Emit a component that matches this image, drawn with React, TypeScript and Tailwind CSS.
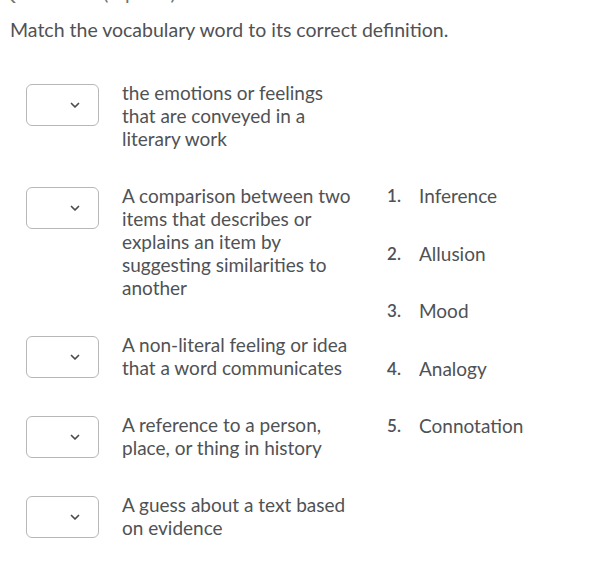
import React from "react";

const rows = [
  "the emotions or feelings that are conveyed in a literary work",
  "A comparison between two items that describes or explains an item by suggesting similarities to another",
  "A non-literal feeling or idea that a word communicates",
  "A reference to a person, place, or thing in history",
  "A guess about a text based on evidence",
];

const choices = ["Inference", "Allusion", "Mood", "Analogy", "Connotation"];

function SelectBox() {
  return (
    <div className="flex h-[42px] w-[73px] shrink-0 items-center justify-end rounded-[6px] border border-[#b5b7b9] bg-white pr-[18px]">
      <svg width="10" height="7" viewBox="0 0 10 7" fill="none">
        <path d="M1.5 1.5 L5 5 L8.5 1.5" stroke="#494c4e" strokeWidth="1.7" strokeLinecap="round" strokeLinejoin="round" />
      </svg>
    </div>
  );
}

export default function App() {
  return (
    <div className="min-h-[577px] bg-white text-[#4f5255] font-['Lato','Liberation_Sans',sans-serif]">
      {/* cut-off question header */}
      <div className="h-[4px] overflow-hidden">
        <div className="-mt-[20px] text-[20px] leading-[24px] text-[#6e7376]">Question 3 (1 point)</div>
      </div>

      <p className="pl-[10px] pt-[14px] text-[19.5px] leading-[24px]">
        Match the vocabulary word to its correct definition.
      </p>

      <div className="flex pt-[42px]">
        <div className="flex flex-col gap-[37px] pl-[26px]">
          {rows.map((text, i) => (
            <div key={i} className="flex gap-[23px]">
              <SelectBox />
              <div className="-mt-[3px] w-[236px] text-[19px] leading-[23px]">{text}</div>
            </div>
          ))}
        </div>

        <div className="flex flex-col gap-[33.5px] pl-[29px] pt-[100px]">
          {choices.map((c, i) => (
            <div key={c} className="flex text-[19px] leading-[24px]">
              <span className="w-[32px] font-semibold text-[17px]">{i + 1}.</span>
              <span>{c}</span>
            </div>
          ))}
        </div>
      </div>
    </div>
  );
}
